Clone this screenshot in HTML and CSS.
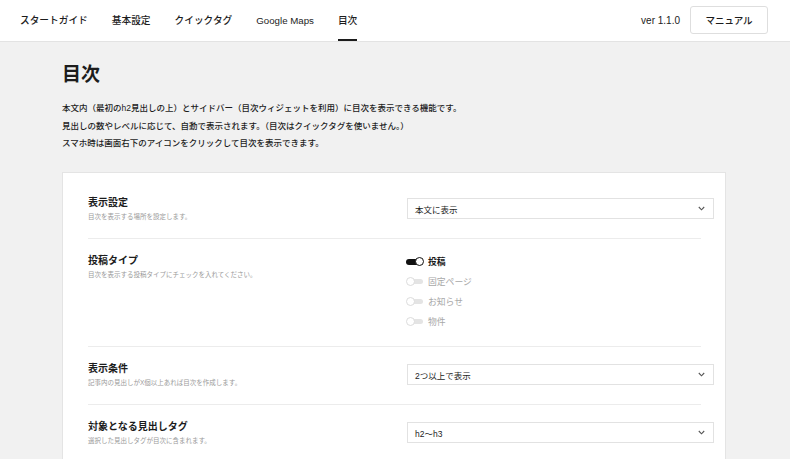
FILE: index.html
```html
<!DOCTYPE html>
<html lang="ja">
<head>
<meta charset="utf-8">
<title>目次</title>
<link rel="stylesheet" href="styles.css">
</head>
<body>
<header class="topbar">
  <nav class="nav">
    <a class="nav-item">スタートガイド</a>
    <a class="nav-item">基本設定</a>
    <a class="nav-item">クイックタグ</a>
    <a class="nav-item">Google Maps</a>
    <a class="nav-item active">目次</a>
  </nav>
  <div class="topbar-right">
    <span class="version">ver 1.1.0</span>
    <button class="manual-btn">マニュアル</button>
  </div>
</header>
<main class="main">
  <h1 class="title">目次</h1>
  <div class="intro">
    <p>本文内（最初のh2見出しの上）とサイドバー（目次ウィジェットを利用）に目次を表示できる機能です。</p>
    <p>見出しの数やレベルに応じて、自動で表示されます。（目次はクイックタグを使いません。）</p>
    <p>スマホ時は画面右下のアイコンをクリックして目次を表示できます。</p>
  </div>
  <section class="card">
    <div class="row">
      <div class="row-label">
        <div class="label">表示設定</div>
        <div class="desc">目次を表示する場所を設定します。</div>
      </div>
      <div class="select"><span>本文に表示</span><svg class="chev" width="7" height="5" viewBox="0 0 7 5"><polyline points="0.8,1 3.5,3.8 6.2,1" fill="none" stroke="#555" stroke-width="1.1"/></svg></div>
    </div>
    <div class="divider"></div>
    <div class="row row-top">
      <div class="row-label shifted">
        <div class="label">投稿タイプ</div>
        <div class="desc">目次を表示する投稿タイプにチェックを入れてください。</div>
      </div>
      <ul class="toggles">
        <li class="toggle-item on"><span class="toggle"><span class="track"></span><span class="knob"></span></span>投稿</li>
        <li class="toggle-item"><span class="toggle"><span class="track"></span><span class="knob"></span></span>固定ページ</li>
        <li class="toggle-item"><span class="toggle"><span class="track"></span><span class="knob"></span></span>お知らせ</li>
        <li class="toggle-item"><span class="toggle"><span class="track"></span><span class="knob"></span></span>物件</li>
      </ul>
    </div>
    <div class="divider"></div>
    <div class="row">
      <div class="row-label">
        <div class="label">表示条件</div>
        <div class="desc">記事内の見出しがX個以上あれば目次を作成します。</div>
      </div>
      <div class="select"><span>2つ以上で表示</span><svg class="chev" width="7" height="5" viewBox="0 0 7 5"><polyline points="0.8,1 3.5,3.8 6.2,1" fill="none" stroke="#555" stroke-width="1.1"/></svg></div>
    </div>
    <div class="divider"></div>
    <div class="row">
      <div class="row-label">
        <div class="label">対象となる見出しタグ</div>
        <div class="desc">選択した見出しタグが目次に含まれます。</div>
      </div>
      <div class="select"><span>h2〜h3</span><svg class="chev" width="7" height="5" viewBox="0 0 7 5"><polyline points="0.8,1 3.5,3.8 6.2,1" fill="none" stroke="#555" stroke-width="1.1"/></svg></div>
    </div>
  </section>
</main>
</body>
</html>
```
FILE: styles.css
```css
* { box-sizing: border-box; }
html, body { margin: 0; padding: 0; }
body {
  background: #f1f1f1;
  font-family: "Liberation Sans", "Noto Sans CJK JP", sans-serif;
  color: #1c1c1c;
  overflow: hidden;
}
.topbar {
  height: 42px;
  background: #fff;
  border-bottom: 1px solid #e3e3e3;
  display: flex;
  justify-content: space-between;
  align-items: stretch;
  padding: 0 22px 0 20px;
}
.nav { display: flex; gap: 24px; }
.nav-item {
  height: 41px;
  display: flex;
  align-items: center;
  font-size: 9.7px;
  font-weight: 500;
  color: #1c1c1c;
  border-bottom: 2px solid transparent;
  padding-top: 1px;
}
.nav-item.active { border-bottom-color: #1c1c1c; }
.topbar-right { display: flex; align-items: center; gap: 10px; padding-bottom: 1px; }
.version { font-size: 10px; font-weight: 500; }
.manual-btn {
  width: 78px;
  height: 28px;
  background: #fff;
  border: 1px solid #dedede;
  border-radius: 3px;
  font-family: inherit;
  font-size: 9.5px;
  font-weight: 500;
  color: #1c1c1c;
  padding: 0;
}
.main { padding: 21px 64px 0 62px; }
.title {
  margin: 0;
  font-size: 19px;
  line-height: 24px;
  font-weight: 700;
}
.intro { margin-top: 13px; }
.intro p {
  margin: 0;
  font-size: 8.5px;
  line-height: 17.5px;
  font-weight: 500;
}
.card {
  margin-top: 19px;
  background: #fff;
  border: 1px solid #e4e4e4;
  padding: 8px 11px 0 25px;
}
.row {
  display: flex;
  align-items: center;
  padding: 16px 0 17px;
}
.row-top { align-items: flex-start; padding: 13px 0 14px; }
.row-label { flex: 1; }
.row-label.shifted { padding-top: 3px; }
.label {
  font-size: 10px;
  line-height: 12px;
  font-weight: 700;
}
.desc {
  margin-top: 4px;
  font-size: 6.5px;
  line-height: 8px;
  color: #9a9a9a;
}
.select {
  width: 307px;
  height: 21px;
  border: 1px solid #e2e2e2;
  display: flex;
  align-items: center;
  justify-content: space-between;
  padding: 0 8px 0 7px;
  font-size: 8.5px;
  color: #1c1c1c;
}
.chev { display: block; }
.divider {
  height: 1px;
  background: #ececec;
  margin-right: 13px;
}
.toggles {
  list-style: none;
  margin: 0 0 0 -1px;
  padding: 0;
  width: 308px;
}
.toggle-item {
  height: 20px;
  display: flex;
  align-items: center;
  gap: 4px;
  font-size: 8.8px;
  color: #a8a8a8;
}
.toggle-item.on { color: #1c1c1c; font-weight: 700; }
.toggle {
  position: relative;
  width: 18px;
  height: 9px;
  display: block;
}
.track {
  position: absolute;
  left: 5px;
  top: 2px;
  width: 12px;
  height: 5px;
  border-radius: 3px;
  background: #e4e4e4;
}
.knob {
  position: absolute;
  left: 0;
  top: 0;
  width: 9px;
  height: 9px;
  border-radius: 50%;
  background: #fff;
  border: 1px solid #dcdcdc;
}
.on .track { left: 0; top: 1.5px; width: 13px; height: 6px; background: #111; }
.on .knob { left: 9px; border: 1.4px solid #111; }
```
